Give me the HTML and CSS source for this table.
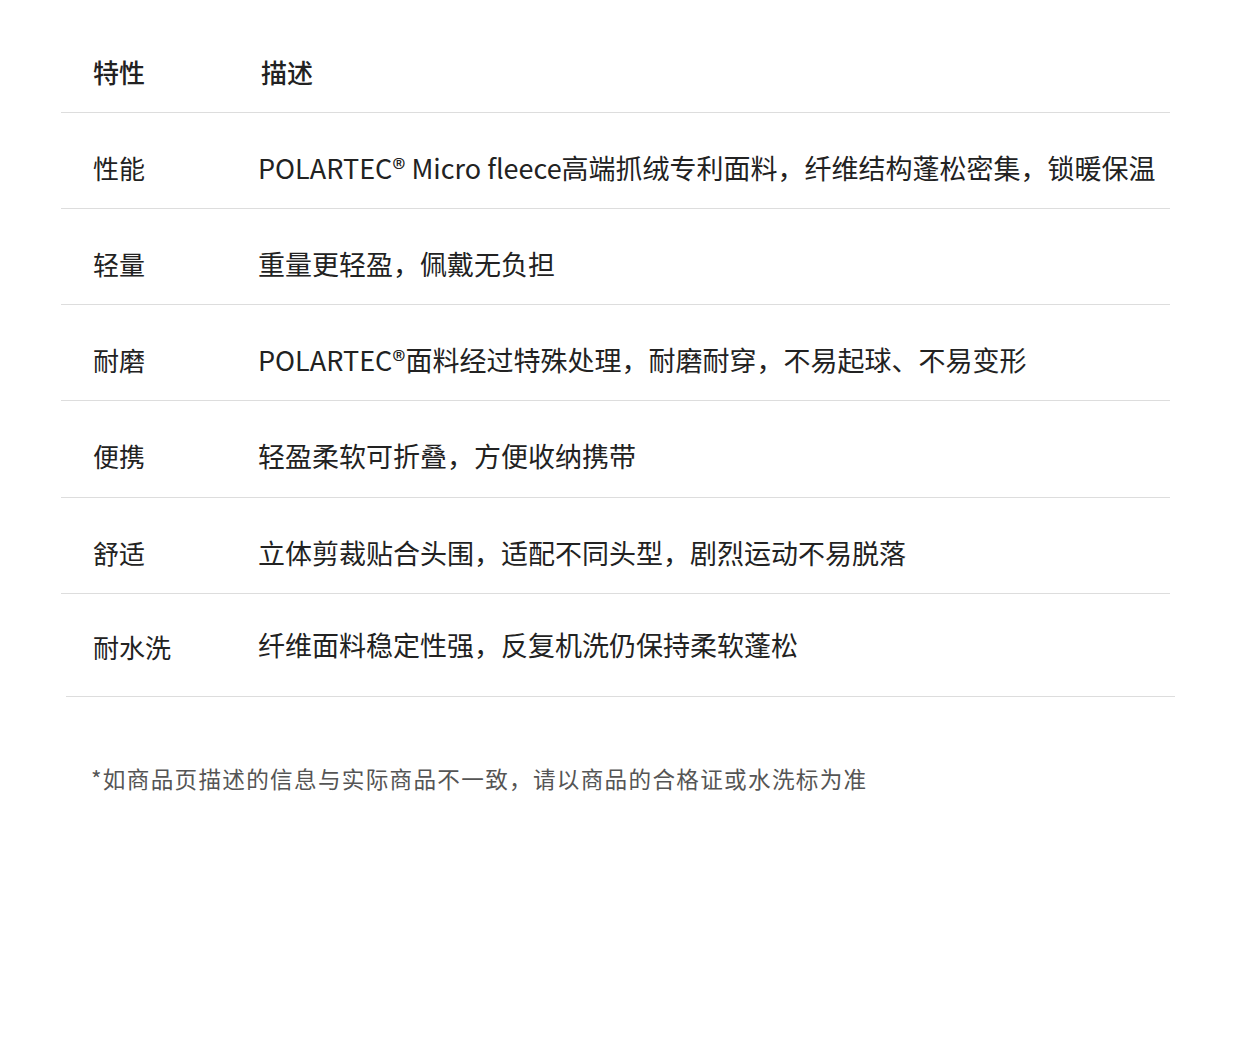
FILE: index.html
```html
<!DOCTYPE html>
<html lang="zh-CN">
<head>
    <meta charset="UTF-8">
    <meta name="viewport" content="width=device-width, initial-scale=1.0">
    <title>产品特性</title>
    <link rel="stylesheet" href="styles.css">
</head>
<body>
    <div class="spec-table">
        <div class="spec-row spec-head">
            <div class="spec-name">特性</div>
            <div class="spec-desc">描述</div>
        </div>
        <div class="spec-row">
            <div class="spec-name">性能</div>
            <div class="spec-desc">POLARTEC® Micro fleece高端抓绒专利面料，纤维结构蓬松密集，锁暖保温</div>
        </div>
        <div class="spec-row">
            <div class="spec-name">轻量</div>
            <div class="spec-desc">重量更轻盈，佩戴无负担</div>
        </div>
        <div class="spec-row">
            <div class="spec-name">耐磨</div>
            <div class="spec-desc">POLARTEC®面料经过特殊处理，耐磨耐穿，不易起球、不易变形</div>
        </div>
        <div class="spec-row spec-tall">
            <div class="spec-name">便携</div>
            <div class="spec-desc">轻盈柔软可折叠，方便收纳携带</div>
        </div>
        <div class="spec-row">
            <div class="spec-name">舒适</div>
            <div class="spec-desc">立体剪裁贴合头围，适配不同头型，剧烈运动不易脱落</div>
        </div>
        <div class="spec-row spec-last">
            <div class="spec-name">耐水洗</div>
            <div class="spec-desc">纤维面料稳定性强，反复机洗仍保持柔软蓬松</div>
        </div>
    </div>
    <p class="note">*如商品页描述的信息与实际商品不一致，请以商品的合格证或水洗标为准</p>
</body>
</html>
```

FILE: styles.css
```css
body {
    margin: 0;
    background: #fff;
    color: #222;
    font-family: "Noto Sans CJK SC", "Noto Sans", sans-serif;
}
.spec-table {
    width: 1109px;
    margin-left: 61px;
}
.spec-row {
    display: grid;
    grid-template-columns: 198px 1fr;
    align-items: center;
    height: 96px;
    padding-top: 14px;
    box-sizing: border-box;
    border-bottom: 1px solid #ddd;
    font-size: 27px;
    line-height: 36px;
}
.spec-head {
    height: 113px;
    padding-top: 32px;
    font-weight: 500;
    font-size: 26px;
}
.spec-head .spec-desc {
    padding-left: 3px;
}
.spec-tall {
    height: 97px;
}
.spec-name {
    padding-left: 32px;
    font-size: 26px;
}
.spec-desc {
    margin-left: -1px;
    white-space: nowrap;
}
.spec-last {
    height: 103px;
    padding-top: 0;
    margin-left: 5px;
    margin-right: -5px;
}
.spec-last .spec-name {
    padding-left: 27px;
    padding-top: 4px;
}
.spec-last .spec-desc {
    margin-left: -6px;
}
.note {
    margin: 66px 0 0 91px;
    font-size: 22.6px;
    letter-spacing: 1.3px;
    line-height: 32px;
    color: #555;
}
```
